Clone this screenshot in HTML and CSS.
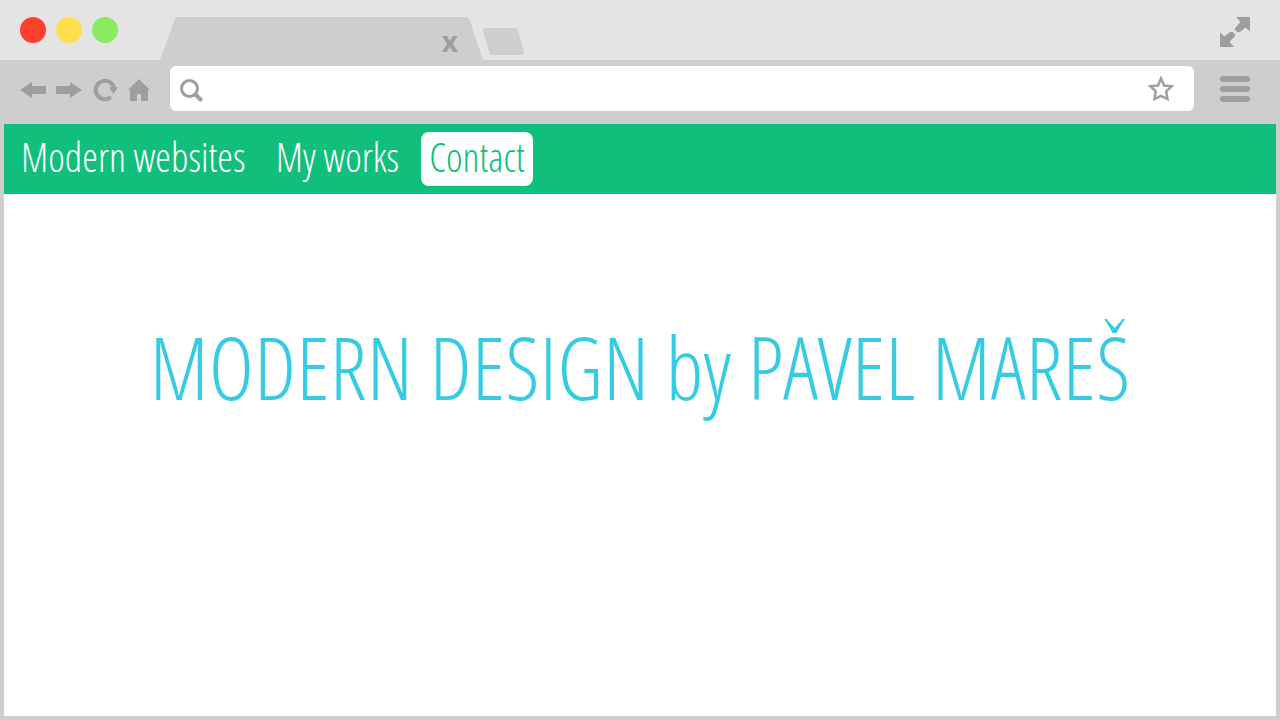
FILE: index.html
```html
<!DOCTYPE html>
<html lang="en">
<head>
    <meta charset="UTF-8">
    <meta name="viewport" content="width=device-width, initial-scale=1.0">
    <title>Modern design by Pavel Mareš</title>
    <link rel="stylesheet" href="styles.css">
</head>
<body>
    <div class="tab-bar">
        <div class="lights">
            <button class="light red" aria-label="Close"></button>
            <button class="light yellow" aria-label="Minimize"></button>
            <button class="light green" aria-label="Maximize"></button>
        </div>
        <div class="tab">
            <svg class="tab-shape" width="323" height="43" viewBox="0 0 323 43" aria-hidden="true">
                <path d="M0 43 L14 4 Q15 0 18 0 H306 Q309 0 310 4 L323 43 Z"/>
            </svg>
            <button class="tab-close" aria-label="Close tab">x</button>
        </div>
        <button class="new-tab" aria-label="New tab">
            <svg width="41" height="27" viewBox="0 0 41 27">
                <path d="M2 0 H32 Q34 0 35 2 L41 25 Q41 27 39 27 H9 Q7 27 6.500 25 L0 2 Q0 0 2 0 Z"/>
            </svg>
        </button>
        <button class="icon fullscreen" aria-label="Full screen">
            <svg width="30" height="30" viewBox="0 0 30 30">
                <path d="M16 0 H30 V14.500 L25.500 10.500 L20 15 Q18 16 16 14 Q14 12 15.500 10.500 L20.500 5 Z"/>
                <path d="M14 30 H0 V15.500 L4.500 19.500 L10 15 Q12 14 14 16 Q16 18 14.500 19.500 L9.500 25 Z"/>
            </svg>
        </button>
    </div>

    <div class="toolbar">
        <button class="icon" aria-label="Back">
            <svg width="26" height="27" viewBox="0 0 26 27">
                <path d="M0 15 L12 7 V11 H26 V19 H12 V23 Z"/>
            </svg>
        </button>
        <button class="icon" aria-label="Forward">
            <svg width="26" height="27" viewBox="0 0 26 27">
                <path d="M26 15 L14 7 V11 H0 V19 H14 V23 Z"/>
            </svg>
        </button>
        <button class="icon" aria-label="Reload">
            <svg width="26" height="27" viewBox="0 0 26 27">
                <path class="line" d="M17.500 23 A9.200 9.200 0 1 1 22 13.500"/>
                <path d="M17 12.500 L26 12 L21.500 19 Z"/>
            </svg>
        </button>
        <button class="icon" aria-label="Home">
            <svg width="22" height="27" viewBox="0 0 22 27">
                <path d="M11 4 L22 15 H20 V26 H13 V19 H9 V26 H2 V15 H0 Z"/>
            </svg>
        </button>
        <form class="address">
            <label for="url" aria-label="Address">
                <svg width="23" height="27" viewBox="0 0 23 27">
                    <circle class="line ring" cx="9.500" cy="13.500" r="8"/>
                    <path class="line" d="M15.500 19.500 L20.500 24.500"/>
                </svg>
            </label>
            <input type="text" id="url" name="url">
            <button type="button" class="icon" aria-label="Bookmark">
                <svg width="26" height="26" viewBox="0 0 26 26">
                    <path class="line outline" d="M13 2.500 L16 9.500 L23.500 10.300 L18.200 15.400 L19.500 23 L13 19.800 L6.500 23 L7.800 15.400 L2.500 10.300 L10 9.500 Z"/>
                </svg>
            </button>
        </form>
        <button class="icon" aria-label="Menu">
            <svg width="30" height="27" viewBox="0 0 30 27">
                <rect y="1" width="30" height="6" rx="3"/>
                <rect y="11" width="30" height="6" rx="3"/>
                <rect y="21" width="30" height="6" rx="3"/>
            </svg>
        </button>
    </div>

    <div class="page">
        <nav class="menu">
            <a href="#websites">Modern websites</a>
            <a href="#works">My works</a>
            <a href="#contact" class="active">Contact</a>
        </nav>
        <main>
            <h1>MODERN DESIGN by PAVEL MAREŠ</h1>
        </main>
    </div>
</body>
</html>
```
FILE: styles.css
```css
body {
    margin: 0;
    min-height: 100vh;
    display: flex;
    flex-direction: column;
    background-color: #cecece;
    font-family: "Open Sans Condensed Light", "Open Sans Condensed", "Open Sans", sans-serif;
    font-weight: 300;
    font-kerning: none;
}
button {
    padding: 0;
    border: none;
    background: none;
    cursor: pointer;
}
svg {
    display: block;
}

/* window bar with tabs */
.tab-bar {
    display: flex;
    height: 60px;
    box-sizing: border-box;
    padding: 0 30px 0 20px;
    background-color: #e4e4e4;
}
.lights {
    display: flex;
    gap: 10px;
    align-items: center;
    margin-right: 42px;
}
.light {
    width: 26px;
    height: 26px;
    border-radius: 50%;
}
.red {
    background-color: #ff402c;
}
.yellow {
    background-color: #ffde4c;
}
.green {
    background-color: #8aea60;
}
.tab {
    position: relative;
    align-self: flex-end;
}
.tab-shape,
.new-tab {
    fill: #cecece;
}
.tab-close {
    position: absolute;
    right: 25px;
    top: 6px;
    color: #9e9e9e;
    font-family: "Open Sans", sans-serif;
    font-size: 28px;
    font-weight: 700;
    line-height: 36px;
}
.new-tab {
    align-self: flex-end;
    margin-bottom: 5px;
}
.icon {
    fill: #9e9e9e;
}
.fullscreen {
    margin: 4px 0 0 auto;
}

/* toolbar */
.toolbar {
    display: flex;
    align-items: center;
    gap: 10px;
    padding: 6px 30px 13px 20px;
}
.address {
    flex: 1;
    display: flex;
    align-items: center;
    height: 45px;
    box-sizing: border-box;
    margin: 0 16px 0 10px;
    padding: 0 20px 0 10px;
    border-radius: 6px;
    background-color: #fff;
}
.address input {
    flex: 1;
    min-width: 0;
    margin: 0 10px;
    padding: 0;
    border: none;
    outline: none;
    font-family: "Open Sans", sans-serif;
    font-size: 20px;
}
.line {
    fill: none;
    stroke: #9e9e9e;
    stroke-width: 4;
    stroke-linecap: round;
}
.ring {
    stroke-width: 3;
}
.outline {
    stroke-width: 2.5;
}

/* page */
.page {
    flex: 1;
    display: flex;
    flex-direction: column;
    margin: 0 4px 4px;
    background-color: #fff;
}
.menu {
    display: flex;
    gap: 14px;
    padding: 8px 9px;
    background-color: #11bf7c;
}
.menu a {
    padding: 0 8px 4px;
    border-radius: 8px;
    color: #fff;
    font-size: 40px;
    line-height: 50px;
    text-decoration: none;
}
.menu a.active {
    background-color: #fff;
    color: #11bf7c;
}
main {
    padding: 112px 16px;
}
h1 {
    margin: 0;
    color: #34cbe3;
    font-size: 87px;
    font-weight: 300;
    line-height: 120px;
    text-align: center;
}
```
